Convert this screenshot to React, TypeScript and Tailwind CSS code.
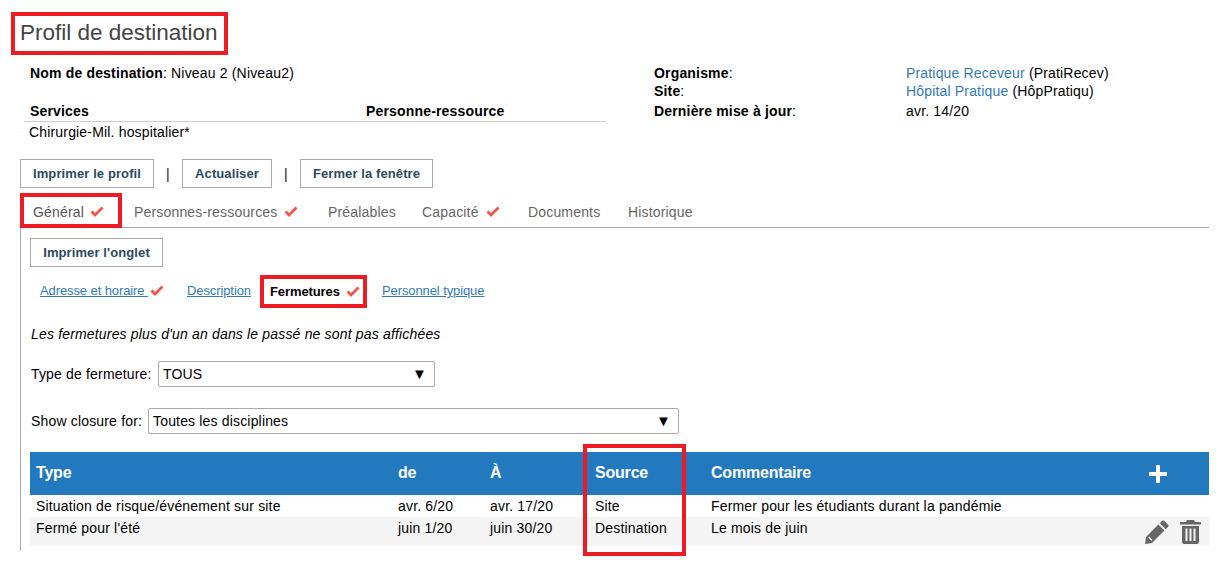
const Check = () => (
  <svg viewBox="0 0 14 12" className="inline-block w-[14px] h-[12px] text-[#f2554a]" fill="none" stroke="currentColor" strokeWidth="2.8">
    <path d="M1.5 5.5 L5 9 L12.5 1.5" />
  </svg>
)

const Pencil = () => (
  <svg viewBox="0 0 24 24" className="w-[24px] h-[24px] text-[#666]" fill="currentColor">
    <path d="M17.2 0.8 Q18.2 0 19.2 0.8 L23.2 4.8 Q24 5.8 23.2 6.8 L20.8 9.2 L14.8 3.2 Z" />
    <path d="M13.4 4.6 L19.4 10.6 L7 23 L0 24 L1 17 Z M3.2 17.6 L6.4 20.8 L7.4 19.8 L4.2 16.6 Z" fillRule="evenodd" />
  </svg>
)

const Trash = () => (
  <svg viewBox="0 0 21 24" className="w-[21px] h-[24px] text-[#666]" fill="currentColor">
    <path d="M7 0 H14 L15 2 H21 V4.5 H0 V2 H6 Z" />
    <path d="M2 6 H19 V22 Q19 24 17 24 H4 Q2 24 2 22 Z M5.5 8.5 V21 H7.5 V8.5 Z M9.5 8.5 V21 H11.5 V8.5 Z M13.5 8.5 V21 H15.5 V8.5 Z" fillRule="evenodd" />
  </svg>
)

const Button = ({ label, className }: { label: string; className: string }) => (
  <button className={`h-[29px] border border-[#aaa] bg-white text-[13px] font-bold tracking-[0.1px] text-[#2c4a60] ${className}`}>
    {label}
  </button>
)

const tabs = [
  { label: 'Personnes-ressources', check: true, width: 'w-[194px]' },
  { label: 'Préalables', check: false, width: 'w-[94px]' },
  { label: 'Capacité', check: true, width: 'w-[106px]' },
  { label: 'Documents', check: false, width: 'w-[100px]' },
  { label: 'Historique', check: false, width: 'w-[80px]' },
]

const rows = [
  { type: 'Situation de risque/événement sur site', from: 'avr. 6/20', to: 'avr. 17/20', source: 'Site', comment: 'Fermer pour les étudiants durant la pandémie' },
  { type: "Fermé pour l'été", from: 'juin 1/20', to: 'juin 30/20', source: 'Destination', comment: 'Le mois de juin' },
]

export default function App() {
  return (
    <div className="w-[1222px] h-[563px] overflow-hidden bg-white text-[14px] leading-[18px] tracking-[0.17px] text-black font-['Liberation_Sans',Arial,sans-serif]">
      <div className="pt-3 pl-[11px]">
        <h1 className="w-[217px] h-[43px] border-4 border-[#ed1c24] pl-[5px] text-[22.5px] leading-[33px] tracking-normal whitespace-nowrap text-[#444]">
          Profil de destination
        </h1>
      </div>

      <div className="flex pl-[24px] h-[105px]">
        <div className="w-[582px] pt-[9px]">
          <div className="pl-[6px]"><b>Nom de destination</b>: Niveau 2 (Niveau2)</div>
          <div className="mt-[20px] flex pl-[6px] pb-[1px] border-b border-[#ccc]">
            <b className="w-[336px]">Services</b>
            <b>Personne-ressource</b>
          </div>
          <div className="pl-[5px] pt-[1px]">Chirurgie-Mil. hospitalier*</div>
        </div>
        <div className="ml-[48px] pt-[9px]">
          <div className="flex"><div className="w-[252px]"><b>Organisme</b>:</div><div><a className="text-[#337ab7]">Pratique Receveur</a> (PratiRecev)</div></div>
          <div className="flex"><div className="w-[252px]"><b>Site</b>:</div><div><a className="text-[#337ab7]">Hôpital Pratique</a> (HôpPratiqu)</div></div>
          <div className="flex mt-[2px]"><div className="w-[252px]"><b>Dernière mise à jour</b>:</div><div>avr. 14/20</div></div>
        </div>
      </div>

      <div className="flex items-center pl-[20px] -mt-[1px]">
        <Button label="Imprimer le profil" className="w-[134px]" />
        <span className="w-[28px] text-center text-[#301030]">|</span>
        <Button label="Actualiser" className="w-[90px]" />
        <span className="w-[28px] text-center text-[#301030]">|</span>
        <Button label="Fermer la fenêtre" className="w-[133px]" />
      </div>

      <div className="mt-[5px] ml-[20px] mr-[13px] h-[35px] flex border-b border-[#aaa] text-[#666]">
        <div className="w-[102px] h-[35px] border-4 border-[#ed1c24] flex items-center gap-[6px] pl-[9px] pt-[3px] text-[#555]">
          Général <Check />
        </div>
        <div className="flex pl-[12px] pt-[3px]">
          {tabs.map((tab) => (
            <div key={tab.label} className={`flex items-center gap-[7px] ${tab.width}`}>
              {tab.label}
              {tab.check && <Check />}
            </div>
          ))}
        </div>
      </div>

      <div className="ml-[20px] mr-[13px] h-[323px] border-l border-[#aaa] pl-[9px] pt-[10px]">
        <Button label="Imprimer l'onglet" className="w-[133px]" />

        <div className="flex items-center h-[33px] mt-[8px] text-[13px] tracking-[-0.1px] text-[#337ab7]">
          <a className="ml-[10px] w-[147px] flex items-center gap-[2px] pb-[1px]"><span className="underline">Adresse et horaire&nbsp;</span><Check /></a>
          <a className="w-[73px] underline pb-[1px]">Description</a>
          <div className="w-[107px] h-[33px] border-4 border-[#ed1c24] flex items-center gap-[6px] pl-[6px] font-bold text-black">
            Fermetures <Check />
          </div>
          <a className="ml-[15px] underline pb-[1px]">Personnel typique</a>
        </div>

        <p className="mt-[17px] pl-[1px] italic">Les fermetures plus d'un an dans le passé ne sont pas affichées</p>

        <div className="mt-[18px] flex items-center h-[26px]">
          <span className="w-[128px] pl-[1px]">Type de fermeture:</span>
          <div className="w-[277px] h-[26px] border border-[#aaa] rounded-[2px] pl-[4px] pr-[7px] flex items-center justify-between">
            TOUS <span className="text-[15px]">▼</span>
          </div>
        </div>

        <div className="mt-[21px] flex items-center h-[26px]">
          <span className="w-[118px] pl-[1px]">Show closure for:</span>
          <div className="w-[531px] h-[26px] border border-[#aaa] rounded-[2px] pl-[4px] pr-[7px] flex items-center justify-between">
            Toutes les disciplines <span className="text-[15px]">▼</span>
          </div>
        </div>

        <div className="relative mt-[18px] w-[1179px]">
          <table className="w-full table-fixed border-collapse">
            <colgroup>
              <col className="w-[362px]" />
              <col className="w-[92px]" />
              <col className="w-[105px]" />
              <col className="w-[116px]" />
              <col className="w-[410px]" />
              <col />
            </colgroup>
            <thead>
              <tr className="h-[43px] bg-[#2279bd] text-left text-[16px] font-bold tracking-[-0.2px] text-white">
                <th className="pl-[6px] pb-[2px]">Type</th>
                <th className="pl-[6px] pb-[2px]">de</th>
                <th className="pl-[6px] pb-[2px]">À</th>
                <th className="pl-[6px] pb-[2px]">Source</th>
                <th className="pl-[6px] pb-[2px]">Commentaire</th>
                <th>
                  <svg viewBox="0 0 18 18" className="w-[18px] h-[18px] ml-[34px]" fill="white">
                    <path d="M7 1 Q7 0 8 0 H10 Q11 0 11 1 V7 H17 Q18 7 18 8 V10 Q18 11 17 11 H11 V17 Q11 18 10 18 H8 Q7 18 7 17 V11 H1 Q0 11 0 10 V8 Q0 7 1 7 H7 Z" />
                  </svg>
                </th>
              </tr>
            </thead>
            <tbody>
              {rows.map((row, index) => (
                <tr key={row.type} className={index === 0 ? 'h-[22px] align-middle' : 'h-[29px] align-top bg-[#f4f4f4]'}>
                  <td className={index === 0 ? 'pl-[6px]' : 'pl-[6px] pt-[2px]'}>{row.type}</td>
                  <td className={index === 0 ? 'pl-[6px]' : 'pl-[6px] pt-[2px]'}>{row.from}</td>
                  <td className={index === 0 ? 'pl-[6px]' : 'pl-[6px] pt-[2px]'}>{row.to}</td>
                  <td className={index === 0 ? 'pl-[6px]' : 'pl-[6px] pt-[2px]'}>{row.source}</td>
                  <td className={index === 0 ? 'pl-[6px]' : 'pl-[6px] pt-[2px]'}>{row.comment}</td>
                  <td className="align-middle">
                    {index === 1 && (
                      <div className="flex items-center justify-end gap-[11px] pr-[8px]">
                        <Pencil />
                        <Trash />
                      </div>
                    )}
                  </td>
                </tr>
              ))}
            </tbody>
          </table>
          <div className="absolute left-[553px] top-[-8px] w-[103px] h-[112px] border-4 border-[#ed1c24]" />
        </div>
      </div>
    </div>
  )
}
